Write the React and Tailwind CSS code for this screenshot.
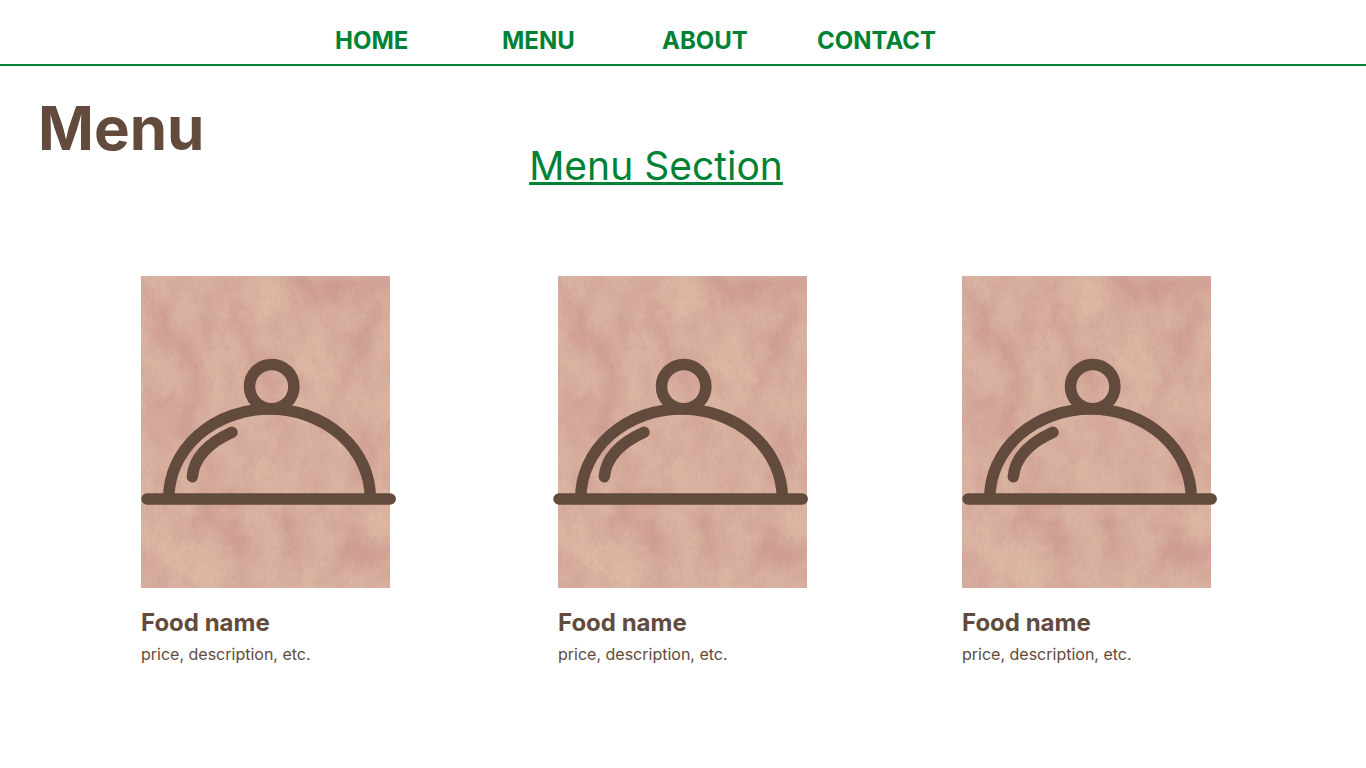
const links = ["HOME", "MENU", "ABOUT", "CONTACT"];

const foods = [
  { id: "a", iconX: 0 },
  { id: "b", iconX: -5 },
  { id: "c", iconX: 0 },
];

function FoodPicture({ id, iconX }) {
  const soft = `soft-${id}`;
  const grain = `grain-${id}`;
  const fibre = `fibre-${id}`;
  const clip = `clip-${id}`;
  return (
    <svg
      viewBox="0 0 249 312"
      className="block w-[249px] max-w-full overflow-visible"
      role="img"
      aria-label="Covered dish"
    >
      <defs>
        <clipPath id={clip}>
          <rect width="249" height="312" />
        </clipPath>
        <filter id={soft} x="-20%" y="-20%" width="140%" height="140%" colorInterpolationFilters="sRGB">
          <feGaussianBlur in="SourceGraphic" stdDeviation="7" result="b" />
          <feTurbulence type="fractalNoise" baseFrequency="0.035 0.03" numOctaves="4" seed="7" result="n" />
          <feDisplacementMap in="b" in2="n" scale="34" xChannelSelector="R" yChannelSelector="G" />
        </filter>
        <filter id={grain} x="0" y="0" width="100%" height="100%" colorInterpolationFilters="sRGB">
          <feTurbulence type="fractalNoise" baseFrequency="0.035 0.026" numOctaves="6" seed="12" />
          <feColorMatrix values="0 0 0 0 0.77  0 0 0 0 0.54  0 0 0 0 0.53  1.9 0 0 0 -0.75" />
        </filter>
        <filter id={fibre} x="0" y="0" width="100%" height="100%" colorInterpolationFilters="sRGB">
          <feTurbulence type="fractalNoise" baseFrequency="0.35 0.2" numOctaves="2" seed="4" />
          <feColorMatrix values="0 0 0 0 0.7  0 0 0 0 0.5  0 0 0 0 0.48  1.2 0 0 0 -0.5" />
        </filter>
      </defs>
      <g clipPath={`url(#${clip})`}>
        <rect width="249" height="312" fill="#dab3a1" />
        <g filter={`url(#${soft})`} fill="none" strokeLinecap="round">
          <g stroke="#cb938d" strokeOpacity="0.55">
            <path d="M155 8Q195 22 245 10" strokeWidth="20" />
            <path d="M240 30Q218 50 222 80" strokeWidth="12" />
            <path d="M24 40Q30 75 50 82T40 150" strokeWidth="18" />
            <path d="M98 35Q94 70 112 84" strokeWidth="18" />
            <path d="M12 125L24 180" strokeWidth="12" />
            <path d="M66 218Q80 250 100 270" strokeWidth="20" />
            <path d="M205 92L204 108" strokeWidth="10" />
            <path d="M225 150Q232 172 222 190" strokeWidth="14" />
            <path d="M205 285Q222 260 246 282" strokeWidth="24" />
            <path d="M147 152V175M78 200L62 190" strokeWidth="10" />
            <path d="M145 245L155 270" strokeWidth="12" />
          </g>
          <g stroke="#dfbba6" strokeOpacity="0.8">
            <path d="M75 20Q85 60 72 120" strokeWidth="14" />
            <path d="M124 12V34" strokeWidth="18" />
            <path d="M175 65Q160 90 182 105" strokeWidth="26" />
            <path d="M12 255Q40 270 60 300" strokeWidth="30" />
            <path d="M225 246L238 260M150 295L165 304" strokeWidth="20" />
            <path d="M115 190L122 150" strokeWidth="16" />
          </g>
        </g>
        <rect width="249" height="312" filter={`url(#${grain})`} opacity="0.42" />
        <rect width="249" height="312" filter={`url(#${fibre})`} opacity="0.25" />
      </g>
      <g
        transform={`translate(${iconX} 0)`}
        fill="none"
        stroke="#624b3c"
        strokeWidth="11.5"
        strokeLinecap="round"
      >
        <circle cx="130.7" cy="110.6" r="22.2" />
        <path d="M27.8 222A100.7 89 0 0 1 229.3 222" />
        <path d="M91 156.3Q54 173 51.3 200.7" />
        <path d="M6 223H249.2" />
      </g>
    </svg>
  );
}

export default function App() {
  return (
    <div className="min-h-screen bg-white font-['Inter',sans-serif] text-[#624b3c]">
      <header className="border-b-2 border-[#008236] pt-[25px] pb-[7px]">
        <nav
          aria-label="Main"
          className="grid grid-cols-[167px_160px_155px_130px] justify-center pr-[84px] text-2xl font-bold text-[#008236]"
        >
          {links.map((link) => (
            <a key={link} href={`#${link.toLowerCase()}`}>
              {link}
            </a>
          ))}
        </nav>
      </header>

      <main>
        <h1 className="px-[38px] pt-8 text-[60px] leading-[60px] font-bold">Menu</h1>
        <h2 className="-mt-4 pr-[54px] text-center text-[39px] leading-[48px] text-[#008236] underline decoration-[3px] underline-offset-2">
          Menu Section
        </h2>
        <section className="grid grid-cols-[417fr_404fr_404fr] pt-[86px] pl-[141px]">
          {foods.map((food) => (
            <article key={food.id}>
              <FoodPicture id={food.id} iconX={food.iconX} />
              <h3 className="pt-[21px] text-2xl leading-7 font-bold">Food name</h3>
              <p className="pt-[5px] text-base leading-6">price, description, etc.</p>
            </article>
          ))}
        </section>
      </main>
    </div>
  );
}
